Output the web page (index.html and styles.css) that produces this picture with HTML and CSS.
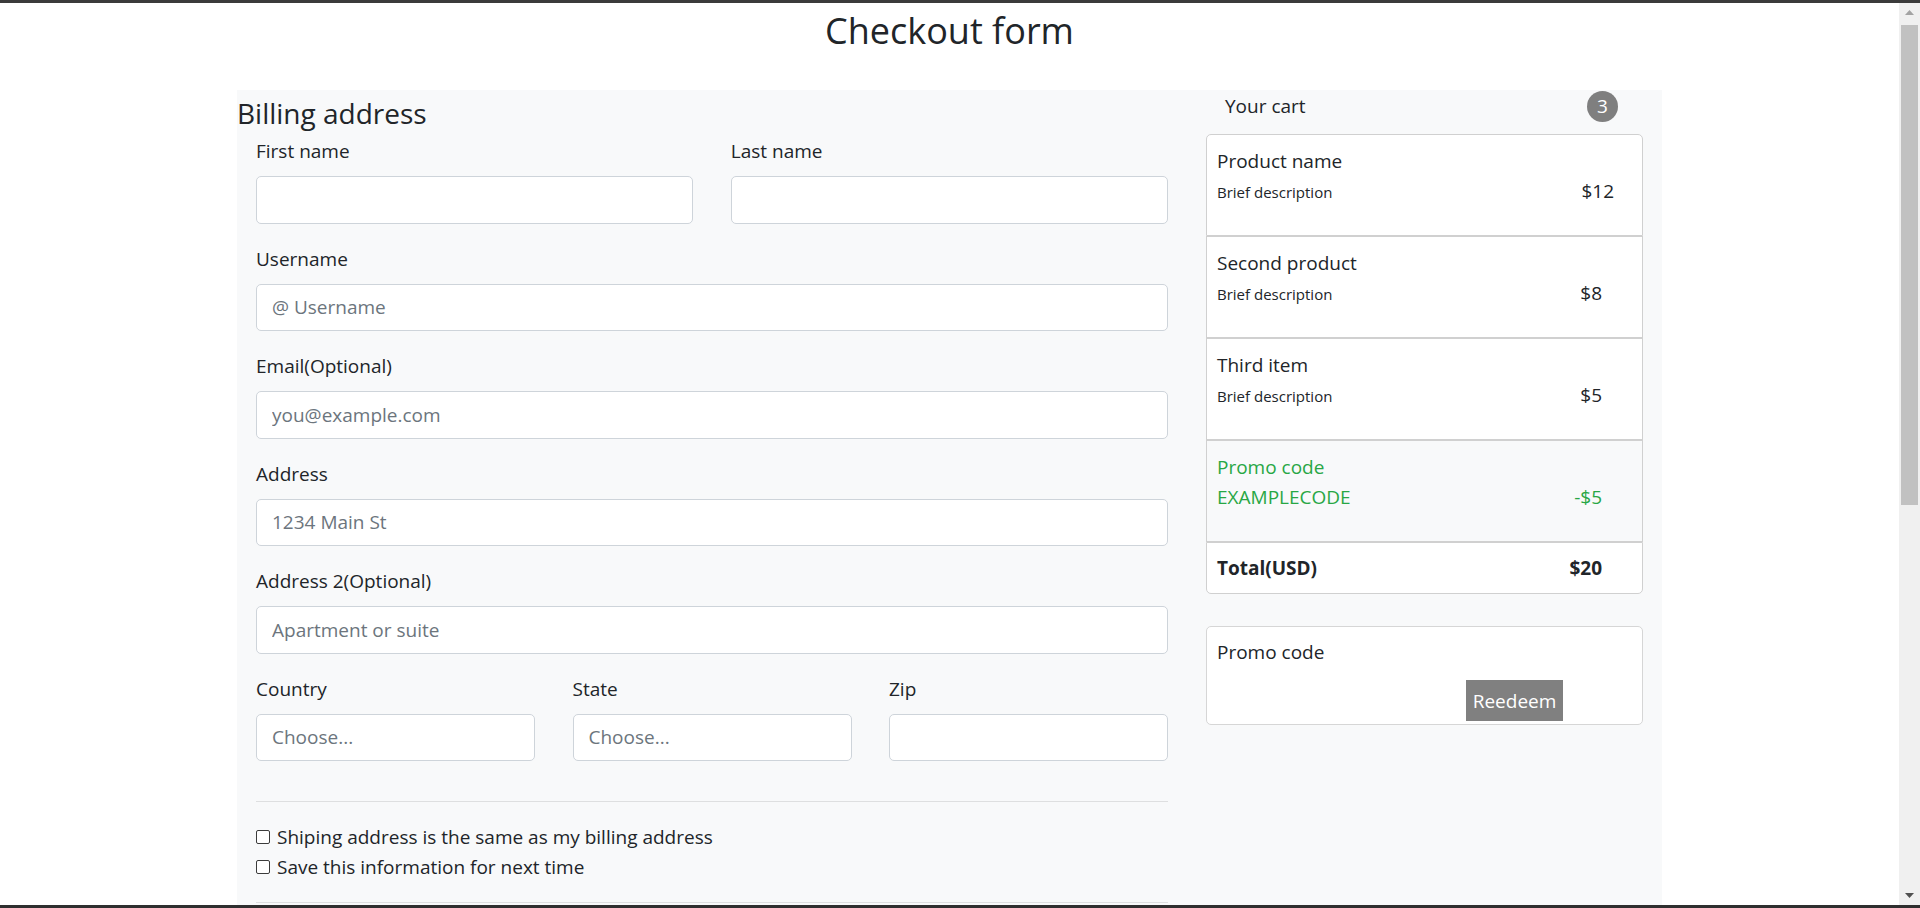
FILE: index.html
```html
<!DOCTYPE html>
<html lang="en">
<head>
<meta charset="utf-8">
<title>Checkout form</title>
<link rel="stylesheet" href="styles.css">
</head>
<body>
<div class="window-top"></div>
<div class="viewport">
  <div class="page">
    <h2 class="page-title">Checkout form</h2>
    <div class="container">
      <main class="col-main">
        <h4 class="section-title">Billing address</h4>
        <form class="form">
          <div class="row row-2">
            <div class="field">
              <label class="label">First name</label>
              <input class="control" type="text">
            </div>
            <div class="field">
              <label class="label">Last name</label>
              <input class="control" type="text">
            </div>
          </div>
          <div class="field">
            <label class="label">Username</label>
            <input class="control" type="text" placeholder="@ Username">
          </div>
          <div class="field">
            <label class="label">Email(Optional)</label>
            <input class="control" type="email" placeholder="you@example.com">
          </div>
          <div class="field">
            <label class="label">Address</label>
            <input class="control" type="text" placeholder="1234 Main St">
          </div>
          <div class="field">
            <label class="label">Address 2(Optional)</label>
            <input class="control" type="text" placeholder="Apartment or suite">
          </div>
          <div class="row row-3">
            <div class="field">
              <label class="label">Country</label>
              <select class="control select"><option>Choose...</option></select>
            </div>
            <div class="field">
              <label class="label">State</label>
              <select class="control select"><option>Choose...</option></select>
            </div>
            <div class="field">
              <label class="label">Zip</label>
              <input class="control" type="text">
            </div>
          </div>
          <hr class="divider">
          <label class="check"><input class="checkbox" type="checkbox"> Shiping address is the same as my billing address</label>
          <label class="check"><input class="checkbox" type="checkbox"> Save this information for next time</label>
          <hr class="divider">
        </form>
      </main>
      <aside class="col-side">
        <div class="cart-head">
          <span class="cart-title">Your cart</span>
          <span class="badge">3</span>
        </div>
        <ul class="cart-list">
          <li class="cart-item">
            <div class="item-name">Product name</div>
            <div class="item-row">
              <small class="item-desc">Brief description</small>
              <span class="price price-wide">$12</span>
            </div>
          </li>
          <li class="cart-item">
            <div class="item-name">Second product</div>
            <div class="item-row">
              <small class="item-desc">Brief description</small>
              <span class="price">$8</span>
            </div>
          </li>
          <li class="cart-item">
            <div class="item-name">Third item</div>
            <div class="item-row">
              <small class="item-desc">Brief description</small>
              <span class="price">$5</span>
            </div>
          </li>
          <li class="cart-item cart-item-promo">
            <div class="item-name">Promo code</div>
            <div class="item-row">
              <span class="promo-code">EXAMPLECODE</span>
              <span class="price">-$5</span>
            </div>
          </li>
          <li class="cart-item cart-item-total">
            <div class="item-row">
              <strong>Total(USD)</strong>
              <strong class="price">$20</strong>
            </div>
          </li>
        </ul>
        <div class="promo-card">
          <div class="promo-title">Promo code</div>
          <div class="promo-actions">
            <button class="btn-redeem" type="button">Reedeem</button>
          </div>
        </div>
      </aside>
    </div>
  </div>
  <div class="scrollbar" aria-hidden="true">
    <div class="sb-btn">
      <svg width="9" height="5" viewBox="0 0 9 5"><path d="M0 5 L4.5 0 L9 5 Z" fill="#a3a3a3"/></svg>
    </div>
    <div class="sb-track"><div class="sb-thumb"></div></div>
    <div class="sb-btn">
      <svg width="9" height="5" viewBox="0 0 9 5"><path d="M0 0 L9 0 L4.5 5 Z" fill="#505050"/></svg>
    </div>
  </div>
</div>
<div class="window-bottom"></div>
</body>
</html>
```

FILE: styles.css
```css
html, body {
  margin: 0;
  padding: 0;
}

body {
  font-family: "Open Sans", "Noto Sans", sans-serif;
  font-size: 19px;
  line-height: 30px;
  color: #212529;
  background: #fff;
}

.window-top {
  height: 3px;
  background: #3b3b3b;
}

.window-bottom {
  position: fixed;
  left: 0;
  right: 0;
  bottom: 0;
  height: 3px;
  background: #2f2f2f;
}

.viewport {
  display: flex;
  align-items: flex-start;
}

.page {
  flex: 1;
  min-width: 0;
}

/* drawn window scrollbar */
.scrollbar {
  flex: 0 0 21px;
  height: 902px;
  display: flex;
  flex-direction: column;
  background: #f0f0f0;
}
.sb-btn {
  height: 19px;
  display: flex;
  align-items: center;
  justify-content: center;
}
.sb-track {
  flex: 1;
  padding: 3px 2px 0;
}
.sb-thumb {
  height: 480px;
  background: #c1c1c1;
}

.page-title {
  margin: 4px 0 35px;
  font-size: 36px;
  line-height: 48px;
  font-weight: 400;
  text-align: center;
}

.container {
  width: 1425px;
  margin: 0 auto;
  min-height: 1544px;
  background: #f8f9fa;
  display: grid;
  grid-template-columns: 950px 475px;
  align-items: start;
}

.section-title {
  margin: 0 0 5px;
  padding-top: 5px;
  font-size: 28px;
  line-height: 36px;
  font-weight: 400;
}

.form {
  padding: 0 19px;
}

.row {
  display: grid;
  column-gap: 37.5px;
}
.row-2 { grid-template-columns: 1fr 1fr; }
.row-3 { grid-template-columns: 1fr 1fr 1fr; }

.field {
  display: flex;
  flex-direction: column;
  margin-bottom: 20px;
}

.label {
  display: block;
  margin-bottom: 10px;
}

.control {
  box-sizing: border-box;
  height: 47.5px;
  width: 100%;
  padding: 0 15px;
  margin: 0;
  border: 1px solid #ced4da;
  border-radius: 5px;
  background: #fff;
  font-family: inherit;
  font-size: 19px;
  color: #495057;
  outline: none;
}
.control::placeholder {
  color: #6c757d;
}
.select {
  -webkit-appearance: none;
  appearance: none;
  color: #6c757d;
}

.divider {
  margin: 20px 0;
  border: 0;
  border-top: 1px solid rgba(0, 0, 0, 0.1);
}

.check {
  display: flex;
  align-items: center;
}

.checkbox {
  -webkit-appearance: none;
  appearance: none;
  box-sizing: border-box;
  width: 14px;
  height: 14px;
  margin: 0 7px 0 0;
  border: 1px solid #3c3c3c;
  border-radius: 2px;
  background: #fff;
}

.col-side {
  padding: 0 19px;
}

.cart-head {
  display: flex;
  justify-content: space-between;
  align-items: center;
  height: 32px;
  margin-bottom: 12px;
  padding: 0 25px 0 19px;
}

.badge {
  display: flex;
  align-items: center;
  justify-content: center;
  width: 31px;
  height: 31px;
  border-radius: 50%;
  background: #7f7f7f;
  color: #fff;
  font-size: 19px;
  line-height: 31px;
}

.cart-list {
  list-style: none;
  margin: 0;
  padding: 0;
}

.cart-item {
  padding: 11px 10px 29px;
  border: 1px solid #d0d0d0;
  background: #fff;
}
.cart-item:first-child {
  border-radius: 5px 5px 0 0;
}
.cart-item:last-child {
  border-radius: 0 0 5px 5px;
}

.cart-item-promo {
  background: #f8f9fa;
  color: #28a745;
}

.cart-item-total {
  padding: 10px;
}

.item-row {
  display: flex;
  justify-content: space-between;
  align-items: baseline;
  height: 30px;
}

.item-desc {
  font-size: 15px;
  line-height: 1;
}

.price {
  margin-right: 30px;
}
.price-wide {
  margin-right: 18px;
}

.promo-card {
  margin-top: 32px;
  box-sizing: border-box;
  height: 99px;
  padding: 10px 10px 0;
  border: 1px solid #d6d6d6;
  border-radius: 5px;
  background: #fff;
}

.promo-actions {
  display: flex;
  margin-top: 13px;
  padding-left: 249px;
}

.btn-redeem {
  width: 97px;
  height: 41px;
  padding: 0;
  border: 0;
  border-radius: 0;
  background: #808080;
  color: #fff;
  font-family: inherit;
  font-size: 19px;
}
```
